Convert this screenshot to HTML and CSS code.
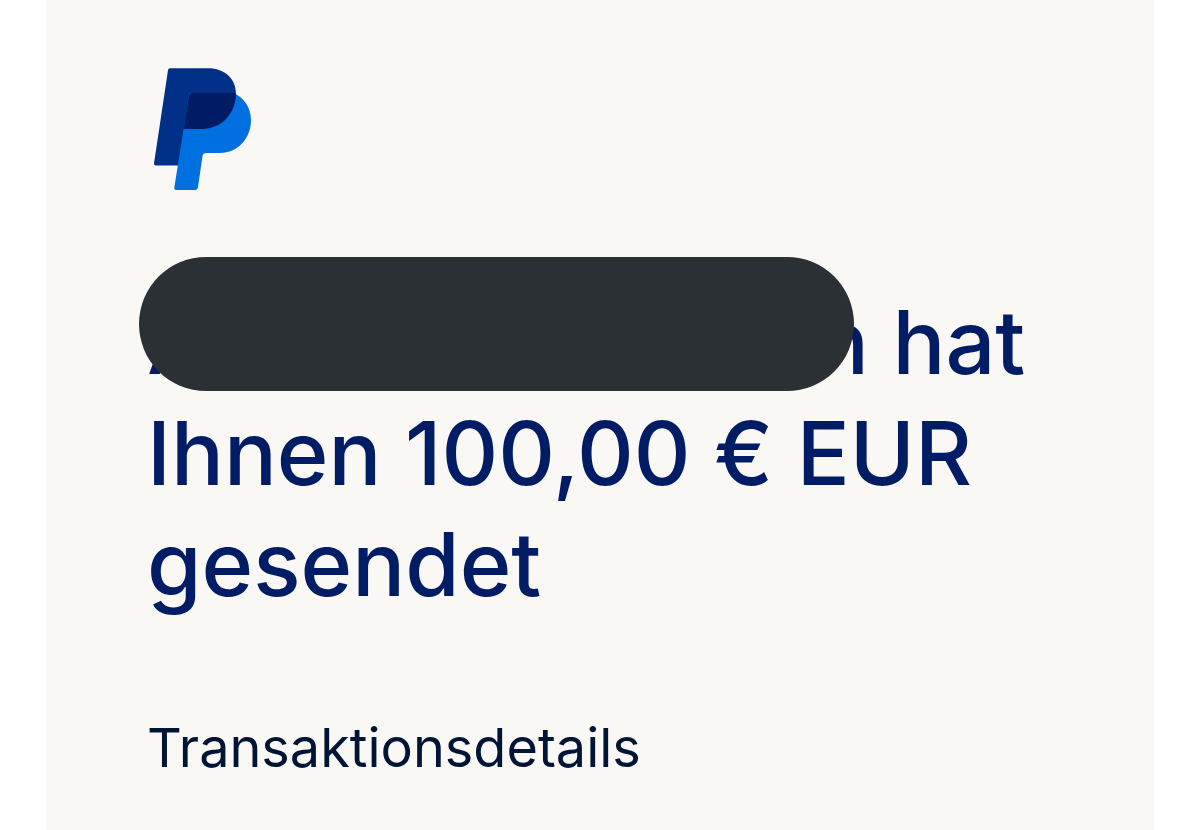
FILE: index.html
```html
<!DOCTYPE html>
<html lang="de">
<head>
<meta charset="utf-8">
<meta name="viewport" content="width=device-width, initial-scale=1">
<title>PayPal</title>
<link rel="stylesheet" href="styles.css">
</head>
<body>
<main class="message">
  <svg class="logo" viewBox="0 0 100 126" role="img" aria-label="PayPal">
    <path fill="#003087" d="M17 2.300H55C72 2.300 83 13 83 28C83 48 68 63 49 63H33L27 99.500H3Q.7 99.500 1 97.500L15 4.300Q15.300 2.300 17 2.300Z"/>
    <path fill="#0070e0" d="M37 27H80C91 31 98 42 98 54C98 72 85 87 67 87H53Q50 87 49.500 90L45 121Q44.500 124 42 124H23Q21 124 21.400 121L36 29Z"/>
    <path fill="#001c64" d="M38.500 27H83C83 48 68 63 49 63H30.500L36 29.500Q36.400 27 38.500 27Z"/>
  </svg>
  <h1 class="headline"><span class="sender">A<span class="redaction"></span><span>n</span></span> hat<br>Ihnen 100,00 € EUR<br>gesendet</h1>
  <h2 class="subhead">Transaktionsdetails</h2>
</main>
</body>
</html>
```
FILE: styles.css
```css
* { box-sizing: border-box; }
body {
  margin: 0;
  background: #fff;
  font-family: Inter, "Liberation Sans", sans-serif;
}
.message {
  min-height: 100vh;
  margin: 0 46px 0 47px;
  padding: 66px 100px 48px;
  background: #faf8f5;
}
.logo { display: block; width: 100px; height: 126px; margin-left: 6px; }
.headline {
  margin: 95px 0 0;
  color: #001c64;
  font-size: 88px;
  font-weight: 500;
  line-height: 111px;
  white-space: nowrap;
}
.sender {
  position: relative;
  display: inline-flex;
  justify-content: space-between;
  width: 722px;
}
.redaction {
  position: absolute;
  top: -30px;
  left: -8px;
  width: 715px;
  height: 134px;
  border-radius: 67px;
  background: #2b3034;
}
.subhead {
  margin: 92px 0 0;
  color: #001435;
  font-size: 54px;
  font-weight: 400;
  line-height: 72px;
}
```
